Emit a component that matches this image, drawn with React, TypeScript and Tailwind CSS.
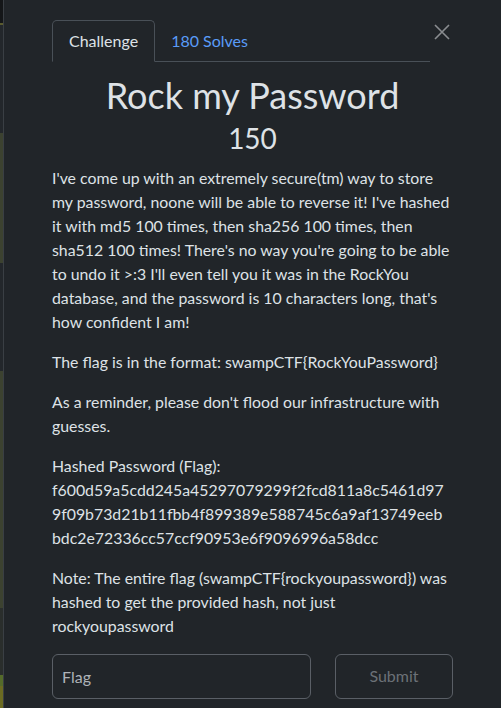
import React from "react";

const FONT = { fontFamily: "Lato, 'Noto Sans', sans-serif" };

// bits of the page behind the modal, visible on the far left
const STRIP = [
  { h: 23, c: "bg-[#141618]" },
  { h: 2, c: "bg-[#5a5b2e]" },
  { h: 108, c: "bg-[#23272b]" },
  { h: 130, c: "bg-[#3c4230]" },
  { h: 108, c: "bg-[#23272b]" },
  { h: 237, c: "bg-[#3c4230]" },
  { h: 67, c: "bg-[#2a2e2c]" },
  { h: 11, c: "bg-[#556b2a]" },
  { h: 22, c: "bg-[#6b6b22]" },
];

const HASH = [
  "f600d59a5cdd245a45297079299f2fcd811a8c5461d97",
  "9f09b73d21b11fbb4f899389e588745c6a9af13749eeb",
  "bdc2e72336cc57ccf90953e6f9096996a58dcc",
];

export default function App() {
  return (
    <div className="flex h-[708px] w-[501px] overflow-hidden bg-[#212529]" style={FONT}>
      <div className="flex w-[3px] shrink-0 flex-col">
        {STRIP.map((s, i) => (
          <div key={i} className={s.c} style={{ height: s.h }} />
        ))}
      </div>

      <div className="flex flex-1 flex-col border-l border-[#3a3f44] pl-12 pr-[48px] pt-5 text-[#dee2e6]">
        {/* tabs + close */}
        <div className="flex items-start justify-between">
          <div className="flex w-[378px] items-end border-b border-[#495057]">
            <div className="-mb-px flex h-[42px] items-center rounded-t-[5px] border border-[#495057] border-b-[#212529] px-4 text-[16px] text-[#dee2e6]">
              Challenge
            </div>
            <div className="flex h-[41px] items-center px-4 text-[16px] text-[#5a9cf8]">180 Solves</div>
          </div>
          <button type="button" className="mr-[3px] mt-1 text-[#8a8d90]">
            <svg width="16" height="16" viewBox="0 0 16 16" fill="none" stroke="currentColor" strokeWidth="1.6">
              <path d="M1 1 L15 15 M15 1 L1 15" />
            </svg>
          </button>
        </div>

        {/* title */}
        <h2 className="mt-[12px] text-center text-[36px] leading-[1.2] font-normal">Rock my Password</h2>
        <h3 className="mt-[5px] text-center text-[28px] leading-[1.2] font-normal">150</h3>

        {/* description */}
        <div className="mt-[10px] text-[15.85px] leading-6">
          <p className="mb-4">
            I've come up with an extremely secure(tm) way to store my password, noone will be able to reverse it! I've
            hashed it with md5 100 times, then sha256 100 times, then sha512 100 times! There's no way you're going to be
            able to undo it &gt;:3 I'll even tell you it was in the RockYou database, and the password is 10 characters
            long, that's how confident I am!
          </p>
          <p className="mb-4">The flag is in the format: swampCTF{"{"}RockYouPassword{"}"}</p>
          <p className="mb-4">As a reminder, please don't flood our infrastructure with guesses.</p>
          <div className="mb-4">
            <p>Hashed Password (Flag):</p>
            {HASH.map((line) => (
              <p key={line}>{line}</p>
            ))}
          </div>
          <p>
            Note: The entire flag (swampCTF{"{"}rockyoupassword{"}"}) was hashed to get the provided hash, not just
            rockyoupassword
          </p>
        </div>

        {/* submit row */}
        <div className="mt-[16px] flex items-center">
          <input
            type="text"
            placeholder="Flag"
            className="h-[45px] w-[259px] rounded-[6px] border border-[#5a5f66] bg-transparent px-[9px] text-[16px] text-[#dee2e6] placeholder:text-[#aeb3b8] outline-none"
          />
          <button
            type="button"
            className="ml-auto h-[45px] w-[118px] rounded-[6px] border border-[#5a5f66] bg-transparent text-[16px] text-[#6c7177]"
          >
            Submit
          </button>
        </div>
      </div>
    </div>
  );
}
